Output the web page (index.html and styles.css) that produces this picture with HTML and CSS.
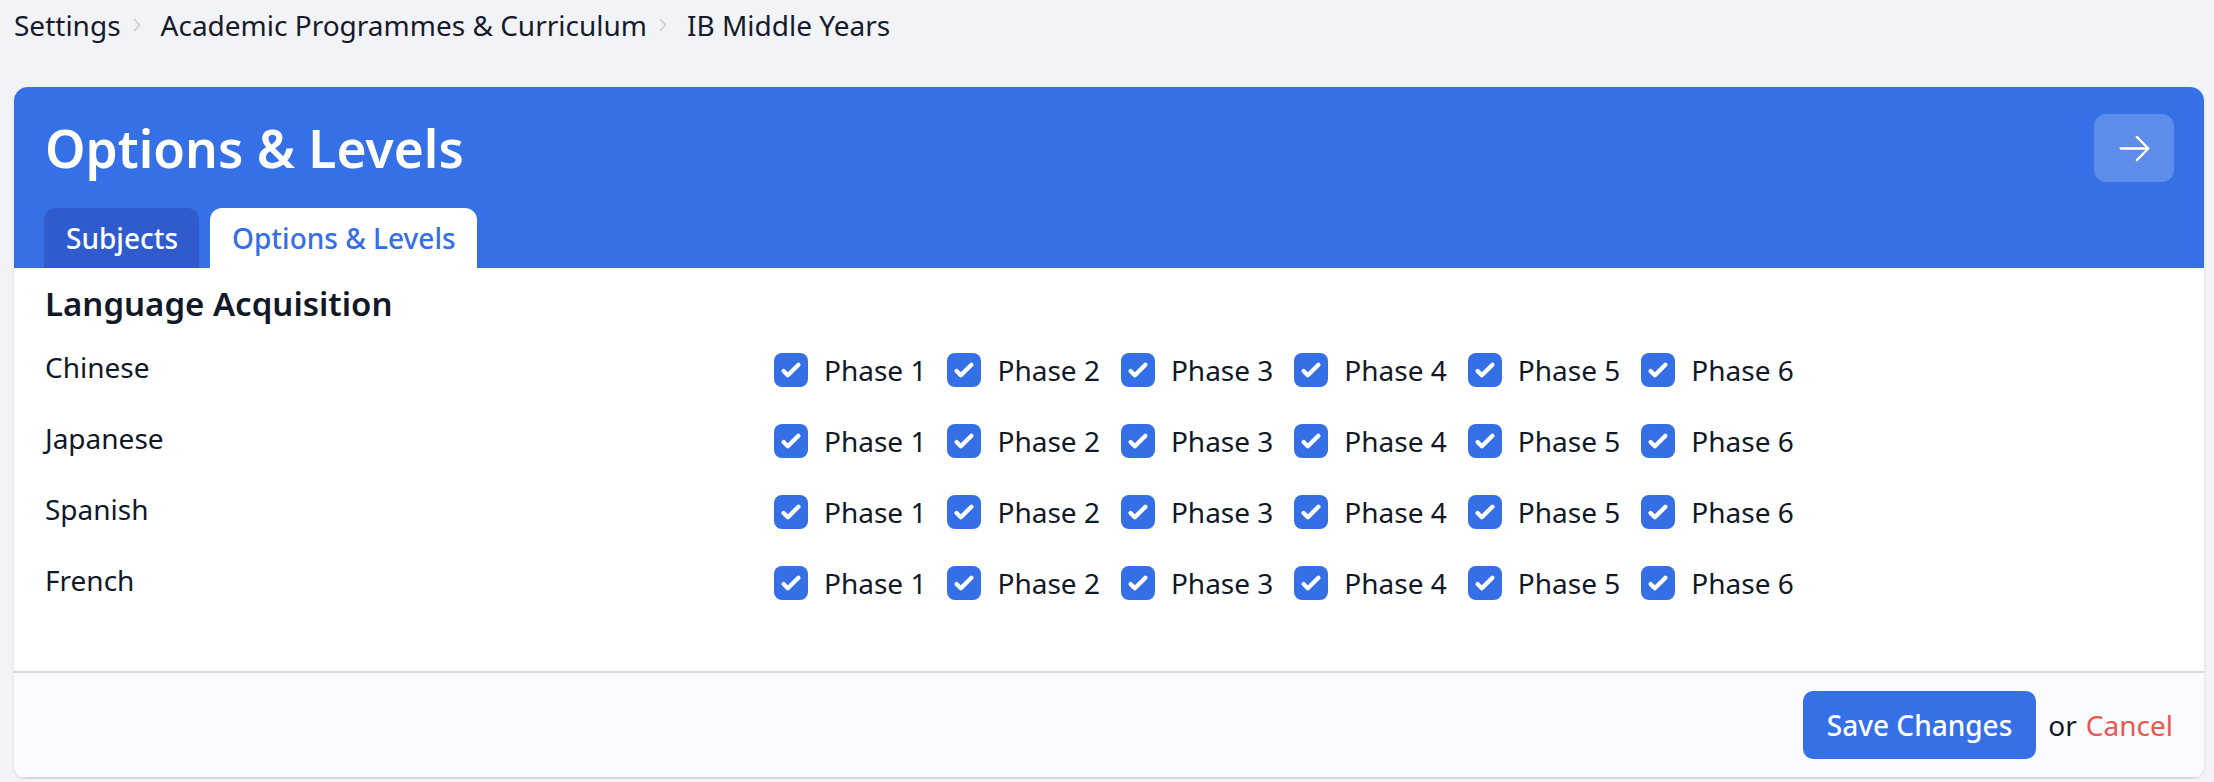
FILE: index.html
```html
<!DOCTYPE html>
<html lang="en">
<head>
<meta charset="utf-8">
<title>Options &amp; Levels</title>
<link rel="stylesheet" href="styles.css">
</head>
<body>
<nav class="crumbs">
  <span class="crumb">Settings</span>
  <svg class="chev" viewBox="0 0 8 14" width="8" height="14"><path d="M1.5 1.5l5 5.5-5 5.5" fill="none" stroke="currentColor" stroke-width="1.6" stroke-linecap="round" stroke-linejoin="round"/></svg>
  <span class="crumb">Academic Programmes &amp; Curriculum</span>
  <svg class="chev" viewBox="0 0 8 14" width="8" height="14"><path d="M1.5 1.5l5 5.5-5 5.5" fill="none" stroke="currentColor" stroke-width="1.6" stroke-linecap="round" stroke-linejoin="round"/></svg>
  <span class="crumb">IB Middle Years</span>
</nav>

<section class="card">
  <header class="card-head">
    <div class="title-row">
      <h1 class="title">Options &amp; Levels</h1>
      <button class="icon-btn" type="button" aria-label="Next">
        <svg viewBox="0 0 24 24" width="37" height="37" fill="none" stroke="currentColor" stroke-width="1.5" stroke-linecap="round" stroke-linejoin="round"><path d="M13.5 4.5L21 12m0 0l-7.5 7.5M21 12H3"/></svg>
      </button>
    </div>
    <div class="tabs">
      <span class="tab">Subjects</span>
      <span class="tab tab-active">Options &amp; Levels</span>
    </div>
  </header>

  <div class="card-body">
    <h2 class="group-title">Language Acquisition</h2>
    <div class="rows" id="rows"></div>
  </div>

  <footer class="card-foot">
    <button class="btn-primary" type="button">Save Changes</button>
    <span class="or">or</span>
    <a class="cancel" href="#">Cancel</a>
  </footer>
</section>
<script src="app.js"></script>
</body>
</html>
```

FILE: app.js
```js
(function () {
  var langs = ["Chinese", "Japanese", "Spanish", "French"];
  var rows = document.getElementById("rows");
  var check = '<svg viewBox="0 0 16 16" class="tick"><path fill="#fff" d="M12.207 4.793a1 1 0 010 1.414l-5 5a1 1 0 01-1.414 0l-2-2a1 1 0 011.414-1.414L6.5 9.086l4.293-4.293a1 1 0 011.414 0z"/></svg>';
  langs.forEach(function (l) {
    var row = document.createElement("div");
    row.className = "row";
    var html = '<span class="row-label">' + l + '</span><div class="opts">';
    for (var i = 1; i <= 6; i++) {
      html += '<label class="opt"><span class="box">' + check + '</span><span class="opt-text">Phase ' + i + '</span></label>';
    }
    html += '</div>';
    row.innerHTML = html;
    rows.appendChild(row);
  });
})();
```

FILE: styles.css
```css
* { box-sizing: border-box; }
html, body { margin: 0; padding: 0; }
body {
  background: #f2f3f7;
  font-family: "Noto Sans", "Open Sans", sans-serif;
  color: #111827;
  font-size: 28px;
}
.crumbs {
  display: flex;
  align-items: center;
  height: 43px;
  padding: 7px 0 0 14px;
  color: #171a2b;
  line-height: 36px;
}
.crumb { white-space: nowrap; }
.chev { color: #c9ccd3; margin: 0 20px 0 12px; flex: none; }

.card {
  margin: 44px 10px 0 14px;
  background: #fff;
  border-radius: 14px;
  overflow: hidden;
  box-shadow: 0 1px 3px rgba(17, 24, 39, 0.12);
}
.card-head {
  background: #3570e6;
  padding: 27px 30px 0 31px;
}
.title-row {
  display: flex;
  align-items: center;
  justify-content: space-between;
  height: 68px;
}
.title {
  margin: 0;
  color: #fff;
  font-size: 51.5px;
  font-weight: 600;
  line-height: 68px;
}
.icon-btn {
  width: 80px;
  height: 68px;
  border: 0;
  border-radius: 12px;
  background: rgba(255, 255, 255, 0.2);
  color: #fff;
  display: flex;
  align-items: center;
  justify-content: center;
  padding: 0;
}
.tabs {
  display: flex;
  gap: 11px;
  margin-top: 26px;
  margin-left: -1px;
}
.tab {
  height: 60px;
  padding: 0 21px 0 22px;
  border-radius: 12px 12px 0 0;
  background: #2f5bcd;
  color: #fff;
  font-weight: 500;
  line-height: 60px;
  white-space: nowrap;
}
.tab-active {
  background: #fff;
  color: #356fe6;
}

.card-body {
  padding: 14px 31px 53px 31px;
}
.group-title {
  margin: 0 0 8px;
  font-size: 33px;
  font-weight: 600;
  line-height: 44px;
  color: #111827;
}
.row {
  display: grid;
  grid-template-columns: 729px 1fr;
  align-items: center;
  height: 71px;
}
.row-label {
  line-height: 36px;
  margin-bottom: 6px;
}
.opts {
  display: flex;
  gap: 21px;
}
.opt {
  display: flex;
  align-items: center;
  gap: 16px;
  line-height: 36px;
  white-space: nowrap;
}
.box {
  width: 34px;
  height: 34px;
  border-radius: 8px;
  background: #356fe6;
  display: block;
  flex: none;
}
.tick { width: 34px; height: 34px; display: block; }

.card-foot {
  display: flex;
  align-items: center;
  justify-content: flex-end;
  height: 108px;
  padding: 0 31px;
  background: #fafbfe;
  border-top: 2px solid #d2d6dd;
  border-bottom: 2px solid #d2d6dd;
}
.btn-primary {
  height: 68px;
  padding: 0 24px;
  border: 0;
  border-radius: 10px;
  background: #3570e6;
  color: #fff;
  font-family: inherit;
  font-size: 28px;
  font-weight: 500;
}
.or { margin: 0 9px 0 12px; color: #111827; }
.cancel { color: #e8574f; text-decoration: none; }
```
